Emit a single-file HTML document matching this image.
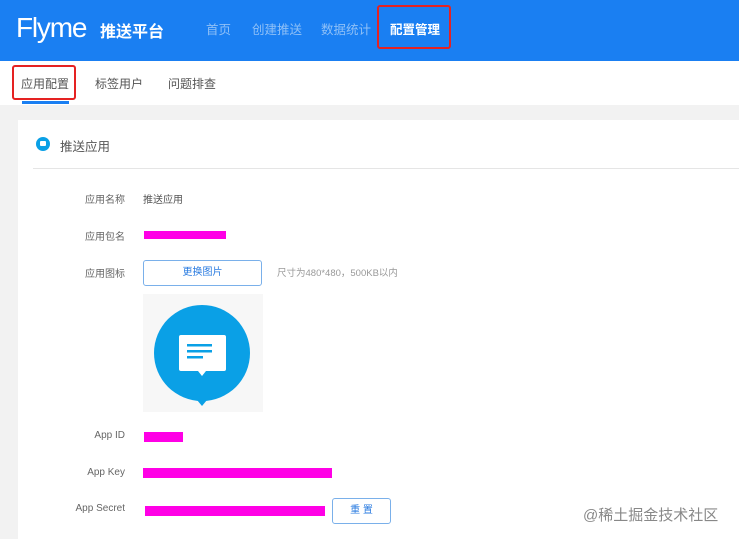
<!DOCTYPE html>
<html><head><meta charset="utf-8"><style>
*{margin:0;padding:0;box-sizing:border-box}
body{width:739px;height:539px;overflow:hidden;background:#f2f2f2;font-family:"Liberation Sans","Noto Sans CJK SC",sans-serif;position:relative}
.a{position:absolute}
.hdr{left:0;top:0;width:739px;height:61px;background:#1a7ff2}
.nav{color:#8fc0f7;font-size:12.5px;top:19px}
.sub{left:0;top:61px;width:739px;height:44px;background:#fff}
.tab{font-size:12px;color:#555;top:75px}
.card{left:18px;top:120px;width:721px;height:419px;background:#fff}
.lbl{font-size:10px;color:#666;text-align:right;width:70px;left:55px}
.mag{background:#ff00e6}
.btn{border:1px solid #7ab0ea;border-radius:3px;color:#2a7be0;font-size:10px;text-align:center;background:#fff}
.red{border:2px solid #e52222;border-radius:3px}
</style></head><body>
<div class="a hdr"></div>
<div class="a" style="left:16px;top:12px;color:#fff;font-size:28px;letter-spacing:-1.2px">Flyme</div>
<div class="a" style="left:100px;top:18px;color:#fff;font-size:16px;font-weight:bold">推送平台</div>
<div class="a nav" style="left:206px">首页</div>
<div class="a nav" style="left:252px">创建推送</div>
<div class="a nav" style="left:321px">数据统计</div>
<div class="a nav" style="left:390px;color:#fff;font-weight:bold">配置管理</div>
<div class="a red" style="left:377px;top:5px;width:74px;height:44px"></div>
<div class="a sub"></div>
<div class="a tab" style="left:21px">应用配置</div>
<div class="a tab" style="left:95px">标签用户</div>
<div class="a tab" style="left:168px">问题排查</div>
<div class="a red" style="left:12px;top:65px;width:64px;height:35px"></div>
<div class="a" style="left:22px;top:101px;width:47px;height:3px;background:#1a7ff2"></div>
<div class="a card"></div>
<div class="a" style="left:36px;top:137px;width:14px;height:14px;border-radius:50%;background:#0aa0e6"></div>
<div class="a" style="left:40px;top:141px;width:6px;height:5px;background:#fff;border-radius:1px"></div>
<div class="a" style="left:60px;top:136px;font-size:12.5px;color:#555">推送应用</div>
<div class="a" style="left:33px;top:168px;width:706px;height:1px;background:#e5e5e5"></div>
<div class="a lbl" style="top:191px">应用名称</div>
<div class="a" style="left:143px;top:191px;font-size:10px;color:#555">推送应用</div>
<div class="a lbl" style="top:228px">应用包名</div>
<div class="a mag" style="left:144px;top:231px;width:82px;height:8px"></div>
<div class="a lbl" style="top:265px">应用图标</div>
<div class="a btn" style="left:143px;top:260px;width:119px;height:26px;line-height:24px">更换图片</div>
<div class="a" style="left:277px;top:265px;font-size:9.5px;color:#999">尺寸为480*480，500KB以内</div>
<div class="a" style="left:143px;top:294px;width:120px;height:118px;background:#f7f7f7"></div>
<svg class="a" style="left:143px;top:294px" width="120" height="118" viewBox="0 0 120 118">
<circle cx="59" cy="59" r="48" fill="#0aa0e6"/><path d="M54 106 L59 112 L64 106Z" fill="#0aa0e6"/>
<rect x="36" y="41" width="47" height="36" rx="2" fill="#fff"/><path d="M55 77 L59 82 L63 77Z" fill="#fff"/>
<rect x="44" y="50" width="25" height="2.5" fill="#0aa0e6"/><rect x="44" y="56" width="25" height="2.5" fill="#0aa0e6"/><rect x="44" y="62" width="16" height="2.5" fill="#0aa0e6"/>
</svg>
<div class="a lbl" style="top:430px;left:55px">App ID</div>
<div class="a mag" style="left:144px;top:432px;width:39px;height:10px"></div>
<div class="a lbl" style="top:467px">App Key</div>
<div class="a mag" style="left:143px;top:468px;width:189px;height:10px"></div>
<div class="a lbl" style="top:503px">App Secret</div>
<div class="a mag" style="left:145px;top:506px;width:180px;height:10px"></div>
<div class="a btn" style="left:332px;top:498px;width:59px;height:26px;line-height:24px">重 置</div>
<div class="a" style="left:583px;top:504px;font-size:15px;color:#888">@稀土掘金技术社区</div>
</body></html>
